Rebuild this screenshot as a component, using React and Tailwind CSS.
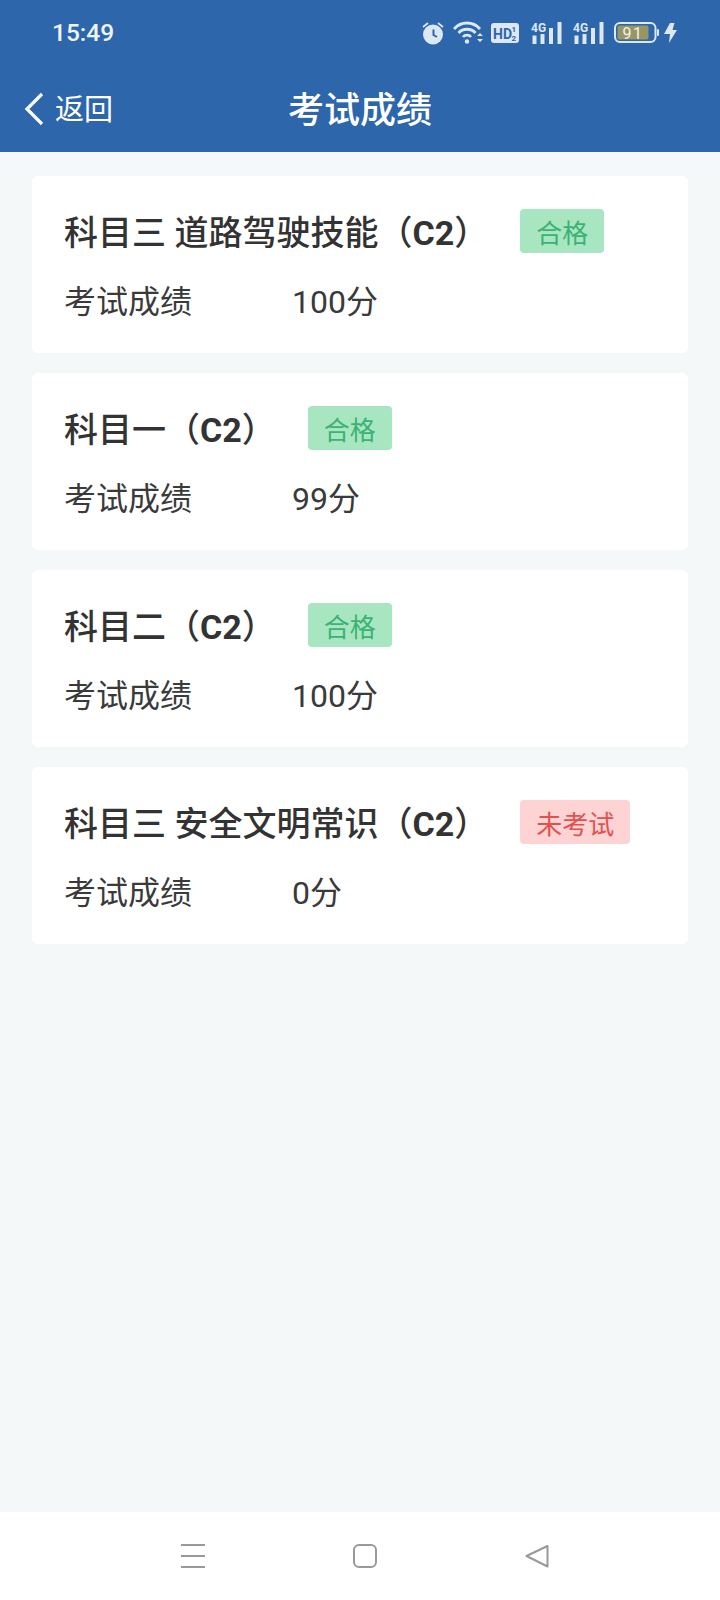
const FONT = "font-['Roboto','Noto_Sans_CJK_SC','Noto_Sans',sans-serif]";

function StatusIcons() {
  const c = "#dce8f6";
  const signal = (
    <svg width="31" height="22" viewBox="0 0 31 22">
      <text x="0" y="10" fontSize="12" fontWeight="700" fill={c} fontFamily="Roboto, sans-serif">4G</text>
      <rect x="1.5" y="13.5" width="4" height="8.5" fill={c} />
      <rect x="9.5" y="12" width="4" height="10" fill={c} />
      <rect x="18" y="6" width="4" height="16" fill={c} />
      <rect x="26.5" y="0" width="4" height="22" fill={c} />
    </svg>
  );
  return (
    <div className="flex items-center">
      <svg width="22" height="24" viewBox="0 0 22 24">
        <path d="M1 6 L6 2 M21 6 L16 2" stroke={c} strokeWidth="1.8" fill="none" />
        <circle cx="11" cy="13.5" r="10" fill={c} />
        <path d="M11.5 8.5 V14 L15 16" stroke="#2d66aa" strokeWidth="2" fill="none" />
      </svg>
      <svg width="31" height="23" viewBox="0 0 31 23" className="ml-[9px]">
        <path d="M1 8 C8 0 20 0 27 8" stroke={c} strokeWidth="2.8" fill="none" />
        <path d="M5.5 12 C10 7 18 7 22.5 12" stroke={c} strokeWidth="2.8" fill="none" />
        <path d="M10 16 C12 13.5 16 13.5 18 16" stroke={c} strokeWidth="2.8" fill="none" />
        <circle cx="14" cy="20.5" r="2.2" fill={c} />
        <path d="M24 15 L27 12 L30 15 Z M24 18 L30 18 L27 21 Z" fill={c} />
      </svg>
      <svg width="28" height="20" viewBox="0 0 28 20" className="ml-[7px]">
        <rect x="0" y="0" width="28" height="20" rx="3" fill={c} />
        <text x="2" y="15.5" fontSize="14" fontWeight="700" fill="#2d66aa" fontFamily="Roboto, sans-serif">HD</text>
        <text x="20.5" y="8.5" fontSize="8" fontWeight="700" fill="#2d66aa" fontFamily="Roboto, sans-serif">1</text>
        <text x="20.5" y="17.5" fontSize="8" fontWeight="700" fill="#2d66aa" fontFamily="Roboto, sans-serif">2</text>
      </svg>
      <div className="ml-[12px] flex">{signal}</div>
      <div className="ml-[11px] flex">{signal}</div>
      <svg width="45" height="21" viewBox="0 0 45 21" className="ml-[10px]">
        <rect x="1" y="1" width="40.5" height="19" rx="5" stroke={c} strokeWidth="2" fill="none" />
        <rect x="3.5" y="3.5" width="31" height="14" rx="2" fill="#9a9663" />
        <rect x="43" y="7" width="2" height="7" rx="1" fill={c} />
        <text x="19" y="16.5" fontSize="16" textAnchor="middle" letterSpacing="1.5" fill="#f1f3ea" fontFamily="Roboto, sans-serif">91</text>
      </svg>
      <svg width="13" height="20" viewBox="0 0 13 20" className="ml-[5px]">
        <path d="M6 0 H10.5 L8.5 7 H13 L5 20 L6 11 H0 Z" fill={c} />
      </svg>
    </div>
  );
}

function Card({ title, score, status, fail }) {
  return (
    <div className="h-[177px] rounded-[6px] bg-white pl-[32px] pt-[33px]">
      <div className="flex h-[44px] items-center">
        <div className="pt-[4px] text-[34px] leading-[44px] font-medium text-[#333333] whitespace-pre">
          {title}（<span className="font-bold">C2</span>）
        </div>
        <div
          className={
            fail
              ? "ml-[32px] flex h-[44px] items-center rounded-[4px] bg-[#fdd3d3] px-[16px] pt-[6px] text-[26px] text-[#e2514f]"
              : "ml-[32px] flex h-[44px] items-center rounded-[4px] bg-[#a8e6c1] px-[16px] pt-[6px] text-[26px] text-[#3bb274]"
          }
        >
          {status}
        </div>
      </div>
      <div className="mt-[25px] flex h-[44px] items-center pt-[4px] text-[32px] text-[#3a3a3a]">
        <div className="w-[228px]">考试成绩</div>
        <div>{score}</div>
      </div>
    </div>
  );
}

export default function App() {
  return (
    <div className={`flex h-[1600px] w-[720px] flex-col overflow-hidden bg-[#f4f8f9] ${FONT}`}>
      <header className="h-[152px] shrink-0 bg-[#2d66aa] text-white">
        <div className="flex h-[65px] items-center justify-between pl-[52px] pr-[43px]">
          <span className="pt-[2px] text-[24.5px] font-medium text-[#eef4fb]">15:49</span>
          <StatusIcons />
        </div>
        <div className="grid h-[87px] grid-cols-[1fr_auto_1fr] items-center">
          <div className="flex items-center pl-[24px]">
            <svg width="20" height="34" viewBox="0 0 20 34">
              <path d="M18 2 L3 17 L18 32" stroke="#ffffff" strokeWidth="3.2" fill="none" />
            </svg>
            <span className="ml-[11px] pt-[4px] text-[29px]">返回</span>
          </div>
          <div className="pt-[4px] text-[36px] font-medium">考试成绩</div>
          <div />
        </div>
      </header>

      <main className="flex flex-1 flex-col gap-[20px] px-[32px] pt-[24px]">
        <Card title="科目三 道路驾驶技能" score="100分" status="合格" />
        <Card title="科目一" score="99分" status="合格" />
        <Card title="科目二" score="100分" status="合格" />
        <Card title="科目三 安全文明常识" score="0分" status="未考试" fail />
      </main>

      <nav className="flex h-[88px] shrink-0 gap-[148px] bg-white pl-[181px] pt-[32px]">
        <svg width="24" height="24" viewBox="0 0 24 24">
          <path d="M0 1 H24 M0 12 H24 M0 23 H24" stroke="#999999" strokeWidth="2" fill="none" />
        </svg>
        <svg width="24" height="24" viewBox="0 0 24 24">
          <rect x="1" y="1" width="22" height="22" rx="5" stroke="#999999" strokeWidth="2" fill="none" />
        </svg>
        <svg width="24" height="24" viewBox="0 0 24 24">
          <path d="M22.5 2 L1.5 12 L22.5 22.5 Z" stroke="#999999" strokeWidth="2" strokeLinejoin="round" fill="none" />
        </svg>
      </nav>
    </div>
  );
}
